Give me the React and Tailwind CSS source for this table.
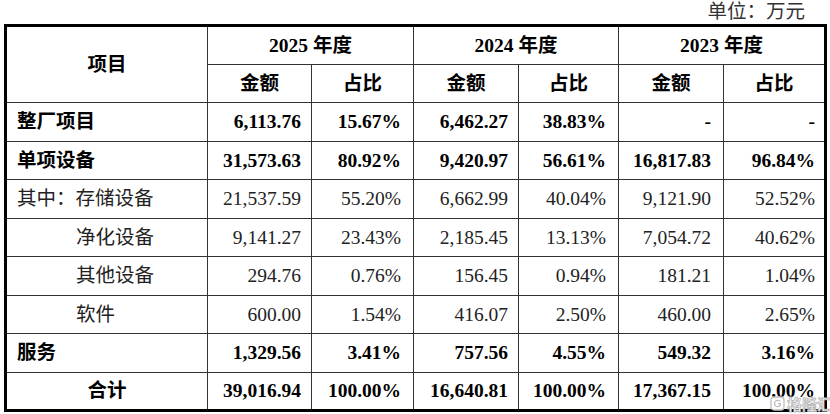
import React from 'react';

const rows = [
  { label: '整厂项目', bold: true, vals: ['6,113.76', '15.67%', '6,462.27', '38.83%', '-', '-'] },
  { label: '单项设备', bold: true, vals: ['31,573.63', '80.92%', '9,420.97', '56.61%', '16,817.83', '96.84%'] },
  { label: '其中：存储设备', vals: ['21,537.59', '55.20%', '6,662.99', '40.04%', '9,121.90', '52.52%'] },
  { label: '净化设备', indent: true, vals: ['9,141.27', '23.43%', '2,185.45', '13.13%', '7,054.72', '40.62%'] },
  { label: '其他设备', indent: true, vals: ['294.76', '0.76%', '156.45', '0.94%', '181.21', '1.04%'] },
  { label: '软件', indent: true, vals: ['600.00', '1.54%', '416.07', '2.50%', '460.00', '2.65%'] },
  { label: '服务', bold: true, vals: ['1,329.56', '3.41%', '757.56', '4.55%', '549.32', '3.16%'] },
  { label: '合计', bold: true, center: true, vals: ['39,016.94', '100.00%', '16,640.81', '100.00%', '17,367.15', '100.00%'] },
];

// right padding per value column
const pads = ['pr-[10px]', 'pr-[12px]', 'pr-[10px]', 'pr-[12px]', 'pr-[12px]', 'pr-[9px]'];

const cell = 'border border-[#333] h-[38.5px] p-0 align-middle';

export default function App() {
  return (
    <div
      className="relative h-[414px] w-[830px] overflow-hidden bg-white text-[19.5px] leading-none text-black"
      style={{ fontFamily: '"Liberation Serif", "Noto Sans CJK SC", serif' }}
    >
      <div className="flex h-[24px] items-center justify-end pr-[25px] text-[#333]">
        <span className="font-normal">单位：万元</span>
      </div>

      <table className="ml-[4px] w-[820px] table-fixed border-collapse border-[3px] border-black">
        <colgroup>
          <col className="w-[202px]" />
          <col className="w-[104px]" />
          <col className="w-[102px]" />
          <col className="w-[105px]" />
          <col className="w-[100px]" />
          <col className="w-[105px]" />
          <col className="w-[102px]" />
        </colgroup>
        <thead>
          <tr className="font-bold">
            <th rowSpan={2} className={`${cell} text-center font-bold`}>项目</th>
            <th colSpan={2} className={`${cell} text-center font-bold`}>2025 年度</th>
            <th colSpan={2} className={`${cell} text-center font-bold`}>2024 年度</th>
            <th colSpan={2} className={`${cell} text-center font-bold`}>2023 年度</th>
          </tr>
          <tr>
            {['金额', '占比', '金额', '占比', '金额', '占比'].map((t, i) => (
              <th key={i} className={`${cell} text-center font-bold`}>{t}</th>
            ))}
          </tr>
        </thead>
        <tbody>
          {rows.map((r) => (
            <tr key={r.label} className={r.bold ? 'font-bold' : 'font-normal text-[#222]'}>
              <td
                className={`${cell} ${r.center ? 'text-center' : 'text-left'} ${
                  r.indent ? 'pl-[69px]' : r.center ? '' : 'pl-[10px]'
                }`}
              >
                {r.label}
              </td>
              {r.vals.map((v, i) => (
                <td key={i} className={`${cell} text-right ${pads[i]}`}>{v}</td>
              ))}
            </tr>
          ))}
        </tbody>
      </table>

      {/* watermark */}
      <div className="pointer-events-none absolute bottom-[3px] right-[-2px] flex items-center gap-[2px]">
        <svg width="15" height="15" viewBox="0 0 15 15" fill="white" stroke="#bdbdbd" strokeWidth="1.3">
          <rect x="1" y="1" width="13" height="13" rx="3" />
          <path d="M10.3 5.6 A3.2 3.2 0 1 0 10.3 9.4 L10.3 7.6 L8 7.6" fill="none" />
        </svg>
        <span
          className="text-[15px] font-bold text-white [-webkit-text-stroke:0.8px_#b5b5b5]"
          style={{ fontFamily: '"Noto Sans CJK SC", sans-serif' }}
        >
          格隆汇
        </span>
      </div>
    </div>
  );
}
